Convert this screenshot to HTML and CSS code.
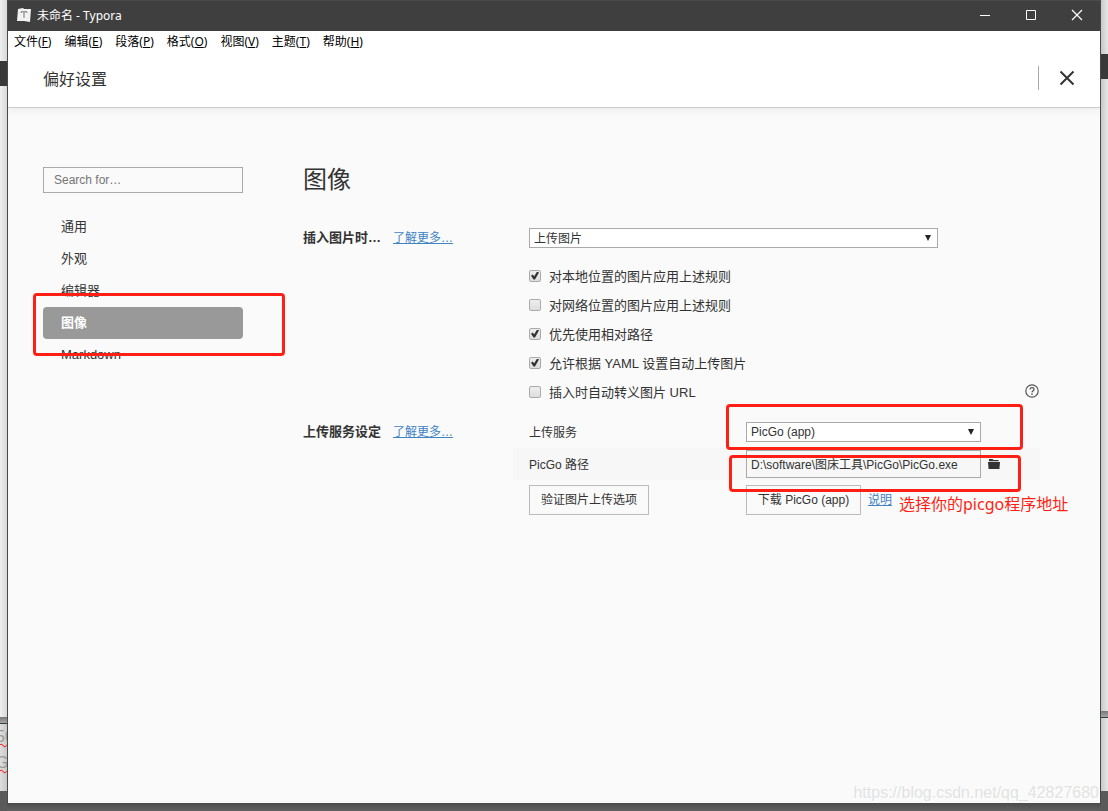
FILE: index.html
```html
<!DOCTYPE html>
<html lang="zh-CN">
<head>
<meta charset="utf-8">
<title>未命名 - Typora</title>
<link rel="stylesheet" href="styles.css">
</head>
<body>
<div class="desktop">
  <div class="edge edge-left" aria-hidden="true">
    <div class="edge-top"></div>
    <div class="edge-bar"></div>
    <div class="edge-page"></div>
    <div class="edge-split"></div>
    <div class="edge-text"><span>50</span><span>GB</span></div>
    <div class="edge-base"></div>
  </div>

  <div class="window">
    <header class="titlebar">
      <svg class="app-icon" width="14" height="14" viewBox="0 0 14 14"><path d="M1 1 L6 0 L7 1 L14 1 L13 14 L7 13 L0 13 Z" fill="#f2f2f2"/><path d="M4 4.8V3.8H10V4.8M7 4V10" fill="none" stroke="#777" stroke-width="1"/></svg>
      <span class="app-title">未命名 - Typora</span>
      <div class="window-buttons">
        <button class="win-btn" aria-label="最小化"><svg width="12" height="12" viewBox="0 0 12 12"><path d="M1 6.5H11" stroke="#fff"/></svg></button>
        <button class="win-btn" aria-label="最大化"><svg width="12" height="12" viewBox="0 0 12 12"><path d="M1.5 1.5H10.5V10.5H1.5Z" fill="none" stroke="#fff"/></svg></button>
        <button class="win-btn" aria-label="关闭"><svg width="12" height="12" viewBox="0 0 12 12"><path d="M1 1L11 11M11 1L1 11" stroke="#fff" stroke-width="1.2"/></svg></button>
      </div>
    </header>

    <nav class="menubar">
      <button>文件(<u>F</u>)</button>
      <button>编辑(<u>E</u>)</button>
      <button>段落(<u>P</u>)</button>
      <button>格式(<u>O</u>)</button>
      <button>视图(<u>V</u>)</button>
      <button>主题(<u>T</u>)</button>
      <button>帮助(<u>H</u>)</button>
    </nav>

    <div class="pref-header">
      <h1>偏好设置</h1>
      <button class="pref-close" aria-label="关闭偏好设置"><svg width="16" height="16" viewBox="0 0 16 16"><path d="M1.5 1.5L14.5 14.5M14.5 1.5L1.5 14.5" stroke="#333" stroke-width="2"/></svg></button>
    </div>

    <div class="pref-body">
      <aside class="sidebar">
        <input class="search" type="text" placeholder="Search for…" aria-label="Search for">
        <ul class="nav-list">
          <li><a href="#general">通用</a></li>
          <li><a href="#appearance">外观</a></li>
          <li><a href="#editor">编辑器</a></li>
          <li class="marked"><a class="active" href="#image">图像</a><span class="mark mark-nav"></span></li>
          <li><a href="#markdown">Markdown</a></li>
        </ul>
      </aside>

      <main class="panel" id="image">
        <h2>图像</h2>

        <section class="group">
          <div class="group-label"><label for="insert">插入图片时…</label><a href="#learn">了解更多…</a></div>
          <div class="group-fields">
            <div class="select select-wide">
              <select id="insert"><option>上传图片</option></select>
            </div>
            <div class="checks">
              <label><input type="checkbox" checked>对本地位置的图片应用上述规则</label>
              <label><input type="checkbox">对网络位置的图片应用上述规则</label>
              <label><input type="checkbox" checked>优先使用相对路径</label>
              <label><input type="checkbox" checked>允许根据 YAML 设置自动上传图片</label>
              <div class="check-row">
                <label><input type="checkbox">插入时自动转义图片 URL</label>
                <button class="help" aria-label="帮助"><svg width="14" height="14" viewBox="0 0 14 14" fill="none" stroke="#555"><circle cx="7" cy="7" r="6.2" stroke-width="1.2"/><path d="M5 5.6C5 4.3 5.8 3.6 7 3.6S9 4.4 9 5.4C9 6.7 7 6.8 7 8.5" stroke-width="1.2"/><path d="M7 9.6V10.9" stroke-width="1.3"/></svg></button>
              </div>
            </div>
          </div>
        </section>

        <section class="group">
          <div class="group-label upload-label"><span>上传服务设定</span><a href="#upload">了解更多…</a></div>
          <div class="group-fields upload-fields">
            <div class="field-row">
              <label for="service">上传服务</label>
              <div class="select select-short">
                <select id="service"><option>PicGo (app)</option></select>
              </div>
              <span class="mark mark-service"></span>
            </div>
            <div class="field-row shaded">
              <label for="path">PicGo 路径</label>
              <div class="path-cell">
                <input class="path" id="path" type="text" value="D:\software\图床工具\PicGo\PicGo.exe">
                <button class="folder" aria-label="浏览"><svg width="12" height="10" viewBox="0 0 12 10" fill="#333"><path d="M1 0H4.5L5.5 1H10.5V2.2H1Z"/><path d="M0 3H12L11.4 10H.6Z"/></svg></button>
              </div>
              <span class="mark mark-path"></span>
            </div>
            <div class="field-row actions">
              <div><button class="btn btn-test">验证图片上传选项</button></div>
              <div class="download-cell">
                <button class="btn btn-download">下载 PicGo (app)</button>
                <a href="#notes">说明</a>
                <span class="note">选择你的picgo程序地址</span>
              </div>
            </div>
          </div>
        </section>
      </main>
    </div>
    <span class="watermark">https://blog.csdn.net/qq_42827680</span>
  </div>

  <div class="edge edge-right" aria-hidden="true">
    <div class="edge-top"></div>
    <div class="edge-bar"></div>
    <div class="edge-page"></div>
    <div class="edge-split"></div>
    <div class="edge-text"></div>
    <div class="edge-base"></div>
  </div>
</div>
</body>
</html>
```
FILE: styles.css
```css
* { box-sizing: border-box; }

body {
  margin: 0;
  color: #333;
  font-family: "Liberation Sans", "Noto Sans CJK SC", sans-serif;
  font-size: 13px;
}

button, input, select {
  margin: 0;
  padding: 0;
  border: 0;
  border-radius: 0;
  background: none;
  color: inherit;
  font-family: inherit;
  font-size: 12px;
}

svg { display: block; }

.desktop {
  display: grid;
  grid-template-columns: 7px 1fr 7px;
  min-height: 100vh;
  overflow: hidden;
  background: linear-gradient(#4c4c4c, #616161) bottom / 100% 8px no-repeat #5a5a5a;
}

/* Slivers of the windows behind */
.edge {
  display: flex;
  flex-direction: column;
  width: 7px;
  overflow: hidden;
  background: linear-gradient(90deg, #f0f0f0, #d8d8d8);
}
.edge-right { background: linear-gradient(90deg, #c8c8c8, #e6e6e6); }
.edge-top { height: 61px; }
.edge-bar { height: 25px; background: #393939; }
.edge-page { flex: 1; }
.edge-split {
  height: 7px;
  border-bottom: 1px solid #2f4040;
  background: linear-gradient(#777, #a5a5a5);
}
.edge-text {
  display: flex;
  flex-direction: column;
  gap: 6px;
  height: 67px;
  padding-top: 3px;
  background: linear-gradient(90deg, #dedede, #c8c8c8);
  color: #999;
  font-size: 16px;
  line-height: 20px;
}
.edge-text span {
  margin-left: -4px;
  text-decoration: underline wavy #f00 1px;
}
.edge-base { height: 20px; background: #5a5a5a; }
.edge-right .edge-top { height: 54px; }
.edge-right .edge-text { height: 73px; background: linear-gradient(90deg, #c8c8c8, #e6e6e6); }

.window {
  position: relative;
  margin-bottom: 7px;
  border: 1px solid #4a4a4a;
  background: #fafafa;
}

.titlebar {
  display: flex;
  align-items: center;
  height: 30px;
  padding-left: 9px;
  background: #3f3f3f;
  color: #fff;
  font-family: "Noto Sans", "Noto Sans CJK SC", sans-serif;
  font-size: 12px;
  line-height: 16px;
}
.app-icon { margin-bottom: 2px; }
.app-title { margin-left: 6px; padding-bottom: 1px; }
.window-buttons { display: flex; margin-left: auto; }
.win-btn {
  display: grid;
  place-items: center;
  width: 46px;
  height: 30px;
  padding-bottom: 2px;
}

.menubar {
  position: relative;
  z-index: 1;
  display: flex;
  gap: 13px;
  height: 22px;
  padding-left: 6px;
  background: #fff;
  color: #000;
  font-family: "Noto Sans", "Noto Sans CJK SC", sans-serif;
}
.menubar button { font-size: 12px; line-height: 22px; white-space: nowrap; }

.pref-header {
  display: flex;
  align-items: center;
  justify-content: space-between;
  height: 55px;
  padding: 0 25px 4px 35px;
  border-bottom: 1px solid #ccc;
  background: #fff;
  box-shadow: 0 1px 8px #e8e8e8;
  clip-path: inset(0 0 -10px 0);
}
.pref-header h1 {
  margin: 0;
  padding-top: 4px;
  font-size: 16px;
  font-weight: 400;
  line-height: 24px;
}
.pref-close {
  height: 24px;
  padding-left: 20px;
  border-left: 1px solid #aaa;
}

.pref-body {
  display: grid;
  grid-template-columns: 200px 1fr;
  gap: 60px;
  padding: 59px 60px 0 35px;
}

.search {
  display: block;
  width: 100%;
  height: 26px;
  padding: 0 10px;
  border: 1px solid #aaa;
}
.search::placeholder { color: #757575; }

.nav-list {
  margin: 18px 0 0;
  padding: 0;
  list-style: none;
}
.nav-list a {
  display: block;
  height: 32px;
  padding-left: 18px;
  border-radius: 4px;
  color: #333;
  line-height: 31px;
  text-decoration: none;
}
.nav-list .active {
  background: #999;
  color: #fff;
  font-weight: 700;
}
.marked { position: relative; }

/* Red callout frames */
.mark {
  position: absolute;
  z-index: 1;
  border: 3px solid #ff1f14;
  border-radius: 4px;
  pointer-events: none;
}
.mark-nav { inset: -14px -42px -17px -10px; }
.mark-service { top: -12px; bottom: -2px; left: 213px; right: 17px; }
.mark-path { top: 7px; bottom: -12px; left: 216px; right: 19px; }

.panel h2 {
  margin: 0;
  font-size: 24px;
  font-weight: 400;
  line-height: 26px;
}
.panel a { color: #4183c4; font-size: 12px; text-decoration: underline; }

.group {
  display: grid;
  grid-template-columns: 210px 1fr;
}
.panel h2 + .group { margin-top: 35px; }
.group-label {
  display: flex;
  gap: 12px;
  font-weight: 700;
  line-height: 20px;
}
.group-label a { font-weight: 400; }
.upload-label { padding-top: 16px; }
.upload-fields { padding-top: 10px; }

.select { position: relative; }
.select select {
  display: block;
  appearance: none;
  width: 100%;
  height: 20px;
  padding: 0 4px;
  border: 1px solid #aaa;
  background: #fff;
}
.select::after {
  content: "";
  position: absolute;
  top: 7px;
  right: 7px;
  border: solid transparent;
  border-width: 6px 3px 0;
  border-top-color: #222;
  pointer-events: none;
}
.select-wide { max-width: 409px; margin-left: 16px; }
.select-wide select { padding-top: 1px; }
.select-short { width: 235px; }

.checks { margin: 13px 0 0 16px; }
.checks label {
  display: flex;
  align-items: center;
  gap: 8px;
  height: 29px;
  white-space: nowrap;
}
.check-row { display: flex; justify-content: space-between; }
.help { align-self: center; margin: 0 1px 2px 0; }

input[type="checkbox"] {
  appearance: none;
  position: relative;
  width: 12px;
  height: 12px;
  border: 1px solid #aaa;
  border-radius: 2px;
  background: linear-gradient(#eee, #ddd);
}
input[type="checkbox"]:checked::after {
  content: "";
  position: absolute;
  inset: 1px;
  background: #333;
  clip-path: polygon(0 54%, 20% 38%, 40% 58%, 76% 0, 100% 14%, 50% 100%, 32% 100%);
}

.field-row {
  position: relative;
  display: grid;
  grid-template-columns: 217px 1fr;
  align-items: center;
  min-height: 32px;
  padding-left: 16px;
  font-size: 12px;
}
.field-row label { padding-bottom: 2px; }
.shaded { background: #f7f7f7; }

.path-cell { display: flex; align-items: center; gap: 7px; }
.path {
  width: 235px;
  height: 28px;
  padding: 0 4px 2px;
  border: 1px solid #aaa;
}

.actions { min-height: 40px; }
.download-cell {
  display: flex;
  align-items: center;
  gap: 7px;
}
.download-cell a { padding-bottom: 4px; }
.btn {
  height: 30px;
  padding-bottom: 4px;
  border: 1px solid #bbb;
  white-space: nowrap;
}
.btn-test { width: 120px; }
.btn-download { width: 115px; }
.note {
  margin: 8px -40px 0 0;
  color: #ff1f14;
  font-family: "Noto Sans", "Noto Sans CJK SC", sans-serif;
  font-size: 16px;
  line-height: 20px;
  white-space: nowrap;
}

.watermark {
  position: absolute;
  right: 1px;
  bottom: 0;
  color: #e2e2e2;
  font-size: 16px;
  line-height: 20px;
  text-shadow: 1px 1px 0 #fff;
}
```
